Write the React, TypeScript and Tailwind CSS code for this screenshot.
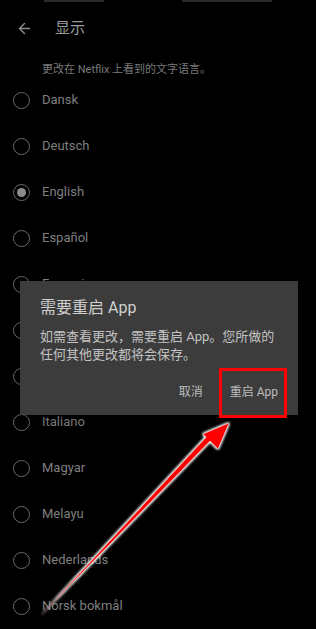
import { ArrowLeft } from "lucide-react"

const languages = [
  { name: "Dansk" },
  { name: "Deutsch" },
  { name: "English", selected: true },
  { name: "Español" },
  { name: "Français" },
  { name: "Hrvatski" },
  { name: "Indonesia" },
  { name: "Italiano" },
  { name: "Magyar" },
  { name: "Melayu" },
  { name: "Nederlands" },
  { name: "Norsk bokmål" },
]

function Radio({ selected }: { selected?: boolean }) {
  return (
    <div className="w-[17px] h-[17px] rounded-full border-[1.5px] border-[#6a6a6a] flex items-center justify-center">
      {selected && <div className="w-[9px] h-[9px] rounded-full bg-[#8c8c8c]" />}
    </div>
  )
}

function PointerArrow() {
  return (
    <svg
      className="absolute left-0 top-0 pointer-events-none"
      width="316"
      height="629"
      viewBox="0 0 316 629"
    >
      <defs>
        <filter id="glow" x="-20%" y="-20%" width="140%" height="140%">
          <feMorphology in="SourceAlpha" operator="dilate" radius="1.2" result="thick" />
          <feFlood floodColor="#ffffff" />
          <feComposite in2="thick" operator="in" result="outline" />
          <feGaussianBlur in="outline" stdDeviation="0.8" result="soft" />
          <feMerge>
            <feMergeNode in="soft" />
            <feMergeNode in="SourceGraphic" />
          </feMerge>
        </filter>
      </defs>
      <g filter="url(#glow)" fill="#ff0000">
        <polygon points="41,615 43,613 213,438 209,434" />
        <polygon points="229,423 203,434 218,449" />
      </g>
    </svg>
  )
}

export default function App() {
  return (
    <div
      className="relative w-[316px] h-[629px] overflow-hidden bg-black select-none"
      style={{ fontFamily: '"Roboto", "Noto Sans CJK SC", sans-serif' }}
    >
      <div className="flex justify-between px-[44px] h-[4px]">
        <div className="w-[60px] h-[2px] bg-[#2a2a2a]" />
        <div className="w-[90px] h-[2px] bg-[#2a2a2a]" />
      </div>

      <div className="h-[48px] flex items-center pl-[16px]">
        <ArrowLeft className="w-[17px] h-[17px] text-[#8a8a8a]" strokeWidth={2} />
        <span className="ml-[22px] text-[15px] text-[#9a9a9a]">显示</span>
      </div>

      <div className="h-[25px] pl-[42px] pt-[11px] text-[11px] leading-[14px] text-[#7a7a7a]">
        更改在 Netflix 上看到的文字语言。
      </div>

      <div className="flex flex-col">
        {languages.map((lang) => (
          <div key={lang.name} className="h-[46px] flex items-center pl-[13px]">
            <Radio selected={lang.selected} />
            <span className="ml-[12px] text-[13px] text-[#7f7f7f]">{lang.name}</span>
          </div>
        ))}
      </div>

      <div className="absolute left-[20px] top-[281px] w-[278px] h-[134px] bg-[#3c3c3c] shadow-lg px-[20px] pt-[17px]">
        <div className="text-[16px] leading-[20px] text-[#cfcfcf]">需要重启 App</div>
        <div className="mt-[10px] text-[13px] leading-[18px] text-[#c2c2c2]">
          如需查看更改，需要重启 App。您所做的任何其他更改都将会保存。
        </div>
        <div className="flex justify-end items-center mt-[19px] gap-[27px] pr-[0px]">
          <span className="text-[12px] text-[#bdbdbd]">取消</span>
          <span className="text-[12px] text-[#bdbdbd]">重启 App</span>
        </div>
      </div>

      <div className="absolute left-[219px] top-[368px] w-[68px] h-[50px] border-[3px] border-[#ff0000]" />

      <PointerArrow />
    </div>
  )
}
